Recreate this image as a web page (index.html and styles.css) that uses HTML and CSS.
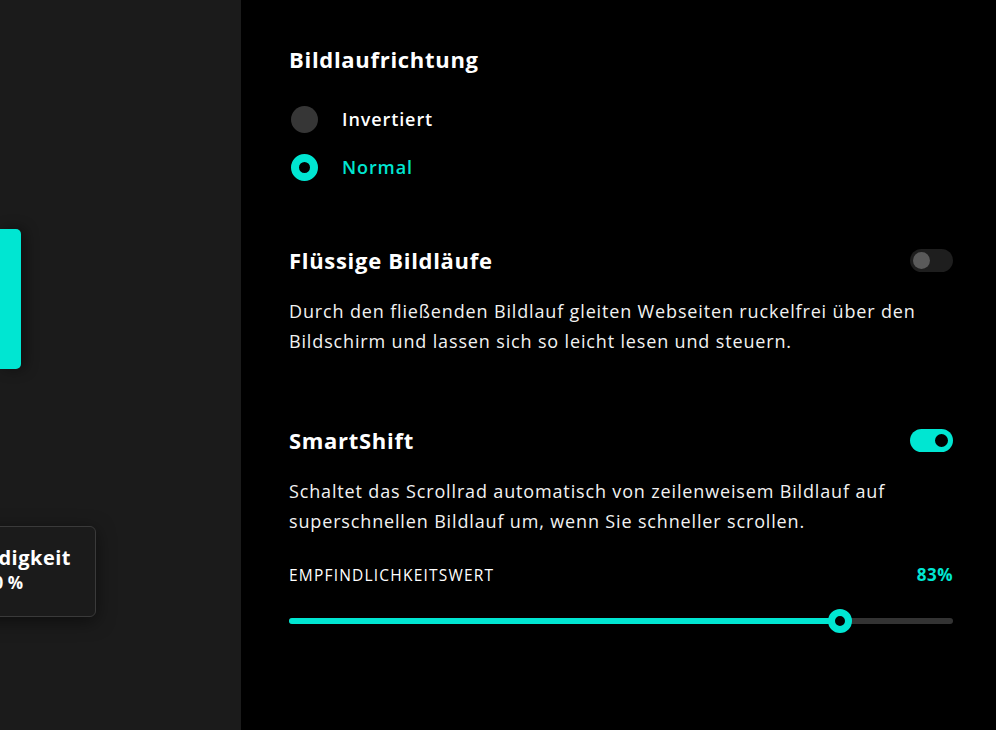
FILE: index.html
```html
<!DOCTYPE html>
<html lang="de">

<head>
    <meta charset="UTF-8">
    <meta name="viewport" content="width=device-width, initial-scale=1.0">
    <title>Bildlauf - Einstellungen</title>
    <link rel="stylesheet" href="styles.css">
</head>

<body>

    <div class="container">
        <!-- linke Seite: Gerätevorschau -->
        <div class="sidebar">
            <div class="wheel-card"></div>
            <div class="speed-tip">
                <p class="tip-title">Geschwindigkeit</p>
                <p class="tip-value">100 %</p>
            </div>
        </div>

        <main>
            <section class="group first">
                <h2>Bildlaufrichtung</h2>
                <div class="radio-list">
                    <label class="radio">
                        <span class="dot"></span>
                        <span>Invertiert</span>
                    </label>
                    <label class="radio checked">
                        <span class="dot"></span>
                        <span>Normal</span>
                    </label>
                </div>
            </section>

            <section class="group smooth">
                <div class="row">
                    <h2>Flüssige Bildläufe</h2>
                    <span class="toggle"></span>
                </div>
                <p class="desc">Durch den fließenden Bildlauf gleiten Webseiten ruckelfrei über den Bildschirm und lassen sich so leicht lesen und steuern.</p>
            </section>

            <section class="group smartshift">
                <div class="row">
                    <h2>SmartShift</h2>
                    <span class="toggle on"></span>
                </div>
                <p class="desc">Schaltet das Scrollrad automatisch von zeilenweisem Bildlauf auf superschnellen Bildlauf um, wenn Sie schneller scrollen.</p>
                <div class="row slider-head">
                    <span class="slider-label">EMPFINDLICHKEITSWERT</span>
                    <span class="slider-value">83%</span>
                </div>
                <div class="slider">
                    <div class="slider-fill" style="width: 83%"></div>
                    <span class="thumb"></span>
                </div>
            </section>
        </main>
    </div>

</body>

</html>
```

FILE: styles.css
```css
body {
    margin: 0;
    padding: 0;
    background-color: #000;
    color: #fff;
    font-family: "Open Sans", "Noto Sans", sans-serif;
}

.container {
    display: flex;
    height: 730px;
}

.sidebar {
    background-color: #1b1b1b;
    width: 241px;
    flex-shrink: 0;
    overflow: hidden;
    padding-top: 229px;
    box-sizing: border-box;
}

.wheel-card {
    width: 21px;
    height: 140px;
    background-color: #00e6d2;
    border-radius: 0 5px 5px 0;
    box-shadow: 4px 0 14px rgba(0, 0, 0, 0.45);
}

.speed-tip {
    margin-top: 157px;
    margin-left: -160px;
    width: 256px;
    height: 91px;
    box-sizing: border-box;
    border: 1px solid #3a3a3a;
    border-radius: 6px;
    background-color: #1b1b1b;
    box-shadow: 0 4px 18px rgba(0, 0, 0, 0.5);
    padding: 17px 24px 0 0;
    text-align: right;
}

.tip-title {
    margin: 0;
    font-size: 20px;
    font-weight: 700;
    line-height: 28px;
    letter-spacing: 0.5px;
}

.tip-value {
    margin: 0;
    font-size: 17px;
    font-weight: 700;
    line-height: 22px;
    padding-right: 48px;
}

main {
    flex: 1;
    padding: 44px 43px 0 48px;
}

h2 {
    margin: 0;
    font-size: 22px;
    font-weight: 700;
    line-height: 30px;
    letter-spacing: 0.7px;
}

.group.smooth {
    margin-top: 64px;
}

.group.smartshift {
    margin-top: 69px;
}

.radio-list {
    margin-top: 31px;
    display: flex;
    flex-direction: column;
    gap: 20px;
}

.radio {
    display: flex;
    align-items: center;
    gap: 24px;
    height: 28px;
    margin-left: 2px;
    font-size: 18px;
    font-weight: 600;
    letter-spacing: 0.9px;
}

.dot {
    width: 27px;
    height: 27px;
    border-radius: 50%;
    background-color: #363636;
    box-sizing: border-box;
}

.radio.checked {
    color: #00e6d2;
}

.radio.checked .dot {
    background-color: #000;
    border: 8.5px solid #00e6d2;
}

.row {
    display: flex;
    justify-content: space-between;
    align-items: center;
}

.toggle {
    width: 43px;
    height: 23px;
    border-radius: 12px;
    background-color: #1e1e1e;
    position: relative;
}

.toggle::after {
    content: "";
    position: absolute;
    left: 3px;
    top: 3px;
    width: 17px;
    height: 17px;
    border-radius: 50%;
    background-color: #5a5a5a;
}

.toggle.on {
    background-color: #00e6d2;
}

.toggle.on::after {
    left: auto;
    right: 2px;
    top: 2px;
    width: 19px;
    height: 19px;
    background-color: #000;
    border: 3px solid #00e6d2;
    box-sizing: border-box;
}

.desc {
    margin: 21px 0 0 0;
    font-size: 18px;
    line-height: 30px;
    letter-spacing: 0.85px;
    color: #f2f2f2;
}

.slider-head {
    margin-top: 29px;
    line-height: 20px;
}

.slider-label {
    font-size: 15.5px;
    letter-spacing: 1.2px;
}

.slider-value {
    font-size: 17px;
    font-weight: 700;
    letter-spacing: 0.5px;
    color: #00e6d2;
}

.slider {
    margin-top: 33px;
    height: 6px;
    border-radius: 3px;
    background-color: #333;
    position: relative;
}

.slider-fill {
    height: 6px;
    border-radius: 3px;
    background-color: #00e6d2;
}

.thumb {
    position: absolute;
    left: 83%;
    top: 50%;
    width: 24px;
    height: 24px;
    margin: -12px 0 0 -12px;
    border-radius: 50%;
    box-sizing: border-box;
    border: 7px solid #00e6d2;
    background-color: #000;
}
```
